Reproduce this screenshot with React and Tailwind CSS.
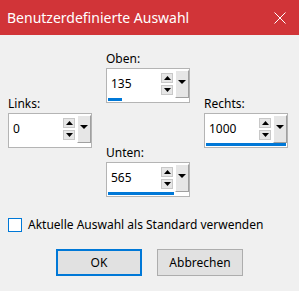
import React from 'react';

const font = { fontFamily: '"Noto Sans", "Open Sans", Arial, sans-serif' };

function UpArrow() {
  return (
    <svg width="7" height="4" viewBox="0 0 7 4">
      <polygon points="0,4 7,4 3.5,0" fill="#000" />
    </svg>
  );
}

function DownArrow({ w = 7, h = 4 }) {
  return (
    <svg width={w} height={h} viewBox={`0 0 ${w} ${h}`}>
      <polygon points={`0,0 ${w},0 ${w / 2},${h}`} fill="#000" />
    </svg>
  );
}

function SpinField({ label, value, fill }) {
  return (
    <div className="flex flex-col">
      <span className="h-[16px] text-[12px] leading-[16px] text-[#000] mb-[1px]">{label}</span>
      <div className="w-[84px] h-[35px] border border-[#b4b4b4] bg-white flex flex-col">
        <div className="h-[29px] flex pt-[1px]">
          <div className="w-[53px] pl-[4px] text-[12px] leading-[28px] text-[#000]">{value}</div>
          <div className="w-[12px] flex flex-col pt-[3px] gap-[2px] ml-[1px]">
            <div className="h-[10px] bg-[#e6e6e6] border border-[#c8c8c8] flex items-center justify-center">
              <UpArrow />
            </div>
            <div className="h-[10px] bg-[#e6e6e6] border border-[#c8c8c8] flex items-center justify-center">
              <DownArrow />
            </div>
          </div>
          <div className="w-[14px] h-[28px] ml-[2px] bg-[#e6e6e6] border-l border-t border-white border-r border-b border-r-[#a0a0a0] border-b-[#a0a0a0] flex justify-center pt-[9px]">
            <DownArrow w={8} h={4} />
          </div>
        </div>
        <div className="h-[3px] px-[1px]">
          <div className="h-[3px] bg-[#0078d7]" style={{ width: `${fill * 100}%` }} />
        </div>
      </div>
    </div>
  );
}

export default function App() {
  return (
    <div className="w-[299px] h-[291px] bg-[#f0f0f0] flex flex-col overflow-hidden" style={font}>
      <div className="h-[35px] bg-[#d13438] flex items-center justify-between pl-[7px] pr-[13px]">
        <span className="text-[14px] text-white">Benutzerdefinierte Auswahl</span>
        <svg width="12" height="12" viewBox="0 0 12 12">
          <path d="M0.5 0.5 L11.5 11.5 M11.5 0.5 L0.5 11.5" stroke="#fff" strokeWidth="1" />
        </svg>
      </div>

      <div className="flex gap-[14px] pl-[8px]">
        <div className="pt-[61px]">
          <SpinField label="Links:" value="0" fill={0} />
        </div>
        <div className="pt-[16px] flex flex-col gap-[42px]">
          <SpinField label="Oben:" value="135" fill={0.18} />
          <SpinField label="Unten:" value="565" fill={0.82} />
        </div>
        <div className="pt-[61px]">
          <SpinField label="Rechts:" value="1000" fill={1} />
        </div>
      </div>

      <label className="flex items-center gap-[6px] pl-[8px] mt-[20px]">
        <span className="w-[14px] h-[14px] border border-[#0078d7] bg-white" />
        <span className="text-[12px] leading-[16px] text-[#000]">Aktuelle Auswahl als Standard verwenden</span>
      </label>

      <div className="flex justify-center gap-[15px] mt-[16px]">
        <button className="w-[86px] h-[27px] border-2 border-[#0078d7] bg-[#e1e1e1] text-[12px] text-[#000]">OK</button>
        <button className="w-[86px] h-[27px] border border-[#adadad] bg-[#e1e1e1] text-[12px] text-[#000]">Abbrechen</button>
      </div>
    </div>
  );
}
